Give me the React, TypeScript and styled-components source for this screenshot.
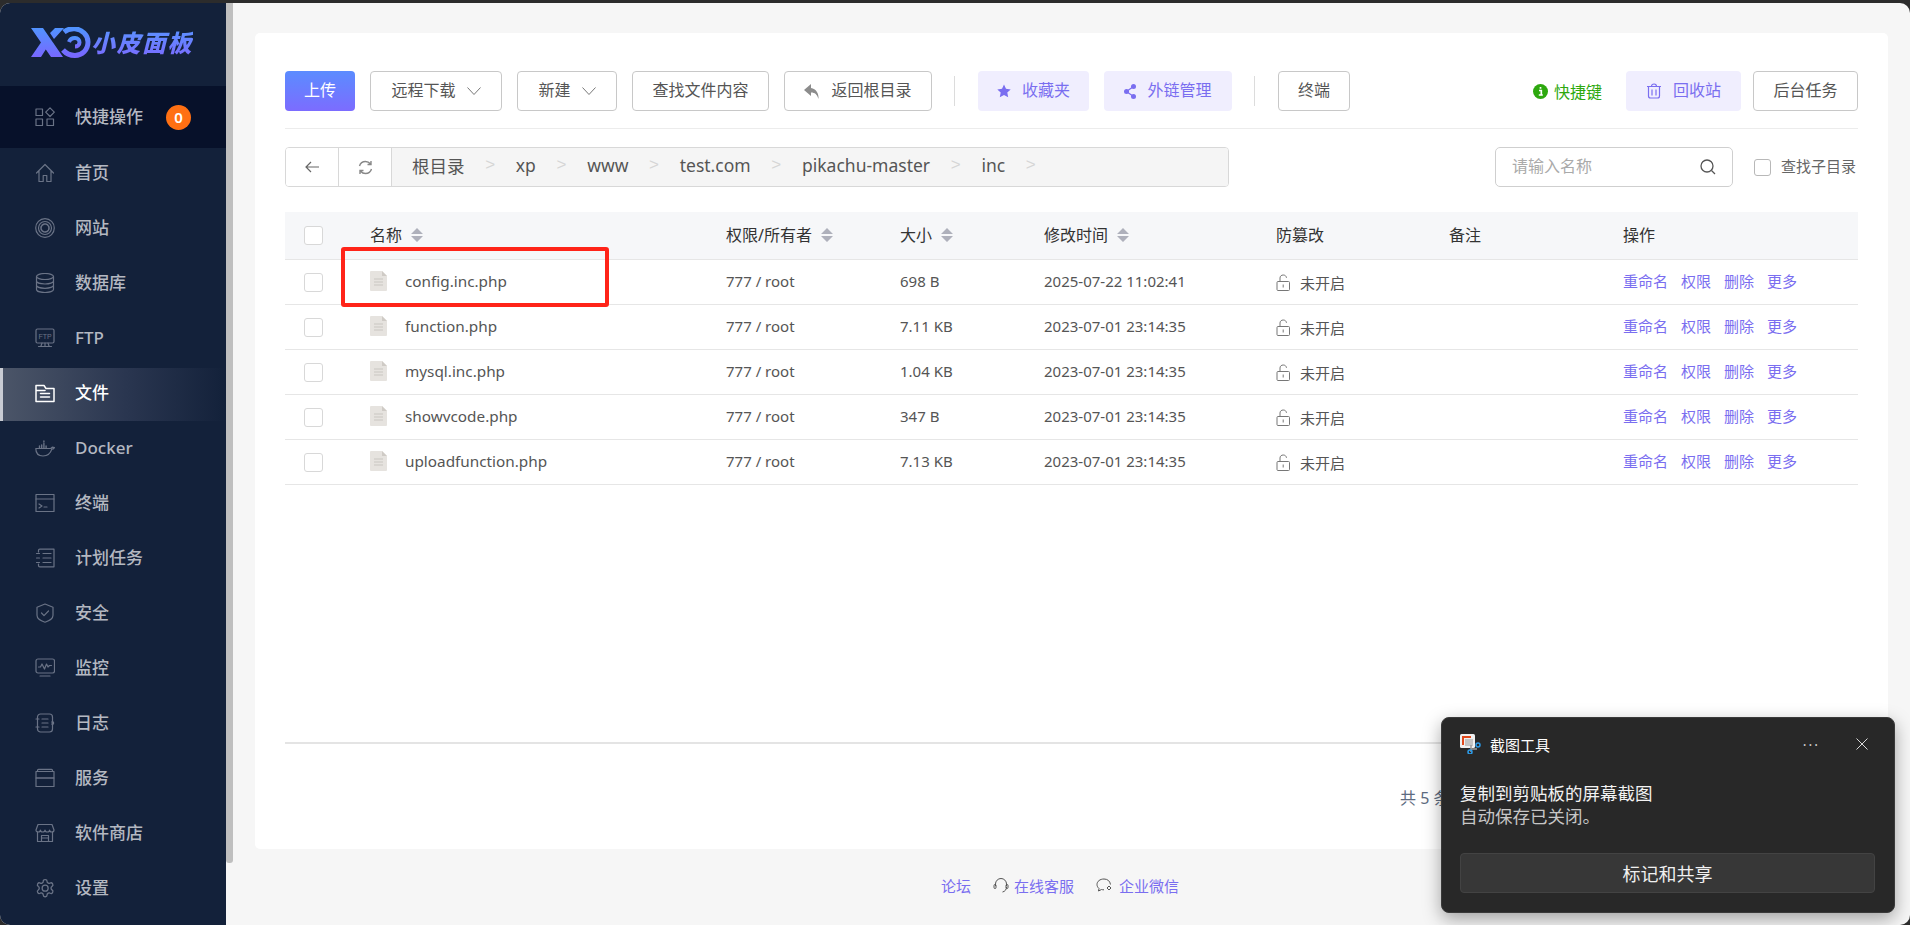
import React from "react";
import styled, { createGlobalStyle } from "styled-components";

const FONT = `"Noto Sans", "Noto Sans CJK SC", sans-serif`;

const Global = createGlobalStyle`
  html, body { margin: 0; padding: 0; height: 100%; background: #2c2c2c; overflow: hidden; }
  * { box-sizing: border-box; }
  body { font-family: ${FONT}; }
`;

const Frame = styled.div`
  position: relative;
  margin-top: 3px;
  width: 1910px;
  height: 922px;
  display: flex;
  border-radius: 10px;
  overflow: hidden;
  background: #f6f6f6;
`;

const Sidebar = styled.aside`
  width: 226px;
  flex: none;
  background: #13213a;
  display: flex;
  flex-direction: column;
`;

const LogoBar = styled.div`
  height: 83px;
  flex: none;
  display: flex;
  align-items: center;
  gap: 0;
  padding: 0 0 4px 31px;
`;

const LogoText = styled.span`
  font-size: 24px;
  line-height: 28px;
  font-weight: 900;
  font-style: italic;
  letter-spacing: 1.5px;
  white-space: nowrap;
  background: linear-gradient(180deg, #5a92ff, #7a6cff);
  -webkit-background-clip: text;
  background-clip: text;
  color: transparent;
`;

const QuickRow = styled.div`
  height: 62px;
  flex: none;
  background: #07112a;
  display: flex;
  align-items: center;
  padding-left: 35px;
`;

const Menu = styled.nav`
  display: flex;
  flex-direction: column;
  gap: 2px;
`;

const MenuRow = styled.div<{ $active?: boolean }>`
  height: 53px;
  display: flex;
  align-items: center;
  padding-left: ${(p) => (p.$active ? 32 : 35)}px;
  padding-bottom: 4px;
  border-left: ${(p) => (p.$active ? "3px solid #c9ccd3" : "none")};
  background: ${(p) =>
    p.$active ? "linear-gradient(90deg, #4b5568 0%, #2a3650 55%, #13213a 100%)" : "transparent"};
`;

const MenuIcon = styled.svg<{ $active?: boolean }>`
  width: 20px;
  height: 20px;
  flex: none;
  margin-right: 20px;
  fill: none;
  stroke: ${(p) => (p.$active ? "#ffffff" : "#6a7386")};
  stroke-width: 1.2;
  stroke-linejoin: round;
  stroke-linecap: round;
`;

const MenuLabel = styled.span<{ $active?: boolean }>`
  font-size: 17px;
  font-weight: 500;
  line-height: 24px;
  color: ${(p) => (p.$active ? "#ffffff" : "#b4b8c1")};
  white-space: nowrap;
`;

const Badge = styled.span`
  width: 25px;
  height: 25px;
  margin-left: 23px;
  border-radius: 50%;
  background: #ff7013;
  color: #fff;
  font-size: 15px;
  font-weight: 600;
  display: flex;
  align-items: center;
  justify-content: center;
`;

const ScrollThumb = styled.div`
  width: 7px;
  height: 860px;
  flex: none;
  background: #bfbfbf;
  border-radius: 0 0 3px 3px;
`;

const Main = styled.main`
  flex: 1;
  min-width: 0;
  display: flex;
  flex-direction: column;
  padding: 30px 22px 0 22px;
`;

const Card = styled.section`
  height: 816px;
  flex: none;
  background: #fff;
  border-radius: 5px;
  padding: 38px 30px 0;
  display: flex;
  flex-direction: column;
  position: relative;
`;

const Toolbar = styled.div`
  display: flex;
  align-items: center;
  height: 58px;
  padding-bottom: 17px;
  border-bottom: 1px solid #ececec;
  gap: 15px;
`;

const Btn = styled.button<{ $kind?: "primary" | "soft" | "plain"; $w: number }>`
  width: ${(p) => p.$w}px;
  height: 40px;
  flex: none;
  border-radius: 4px;
  font-family: ${FONT};
  font-size: 16px;
  padding: 0 0 4px;
  display: inline-flex;
  align-items: center;
  justify-content: center;
  gap: 11px;
  border: ${(p) => (!p.$kind || p.$kind === "plain" ? "1px solid #c8c8c8" : "none")};
  background: ${(p) =>
    p.$kind === "primary"
      ? "linear-gradient(180deg, #5b8cff, #7c6cff)"
      : p.$kind === "soft"
        ? "#f0eefe"
        : "#fff"};
  color: ${(p) => (p.$kind === "primary" ? "#fff" : p.$kind === "soft" ? "#7a6ef0" : "#555")};
  svg {
    margin-top: 4px;
  }
`;

const VSep = styled.span`
  width: 1px;
  height: 30px;
  background: #dcdcdc;
  margin: 0 8.5px 0 6.5px;
  flex: none;
`;

const RightTools = styled.div`
  margin-left: auto;
  display: flex;
  align-items: center;
  gap: 12px;
`;

const Hotkey = styled.span`
  display: inline-flex;
  align-items: center;
  gap: 6px;
  margin-right: 12px;
  color: #2da80e;
  font-size: 16px;
`;

const PathRow = styled.div`
  display: flex;
  align-items: center;
  margin-top: 18px;
  height: 40px;
`;

const PathBox = styled.div`
  width: 944px;
  height: 40px;
  display: flex;
  border: 1px solid #d8d8d8;
  border-radius: 4px;
  overflow: hidden;
`;

const PathBtn = styled.div`
  width: 53px;
  flex: none;
  display: flex;
  align-items: center;
  justify-content: center;
  border-right: 1px solid #d8d8d8;
  background: #fff;
  color: #666;
`;

const Crumbs = styled.div`
  flex: 1;
  background: #f5f5f5;
  display: flex;
  align-items: center;
  padding: 0 0 4px 20px;
  gap: 20.7px;
  font-size: 17.5px;
  color: #555;
`;

const CrumbSep = styled.span`
  color: #d6d6d6;
  font-size: 17px;
  font-family: "Liberation Sans", sans-serif;
`;

const Search = styled.div`
  margin-left: 266px;
  width: 238px;
  height: 40px;
  border: 1px solid #cfcfcf;
  border-radius: 5px;
  display: flex;
  align-items: center;
  justify-content: space-between;
  padding: 0 16px 4px;
  font-size: 16px;
  color: #aaa;
  svg {
    margin-top: 4px;
  }
`;

const SubCheck = styled.label`
  margin-left: 21px;
  display: flex;
  align-items: center;
  gap: 10px;
  font-size: 15px;
  color: #666;
  white-space: nowrap;
`;

const SubLabel = styled.span`
  padding-bottom: 4px;
`;

const Box = styled.span<{ $size?: number; $dark?: boolean }>`
  width: ${(p) => p.$size ?? 18}px;
  height: ${(p) => p.$size ?? 18}px;
  flex: none;
  display: block;
  background: #fff;
  border: 1px solid ${(p) => (p.$dark ? "#b8b8b8" : "#d8d8d8")};
  border-radius: 3px;
`;

const TableWrap = styled.div`
  margin-top: 25px;
`;

const GridRow = styled.div<{ $head?: boolean }>`
  display: grid;
  grid-template-columns: 85px 356px 174px 144px 232px 173px 174px 235px;
  align-items: center;
  height: ${(p) => (p.$head ? 48 : 45)}px;
  background: ${(p) => (p.$head ? "#f6f7f9" : "#fff")};
  border-bottom: 1px solid #e6e6e6;
  font-size: ${(p) => (p.$head ? 16 : 15)}px;
  color: ${(p) => (p.$head ? "#333" : "#555")};
`;

const CheckCell = styled.div`
  padding-left: 19px;
`;

const HeadCell = styled.div`
  display: flex;
  align-items: center;
  gap: 9px;
  padding-bottom: 4px;
  white-space: nowrap;
  svg {
    margin-top: 3px;
  }
`;

const TextCell = styled.div`
  padding-bottom: 2px;
  white-space: nowrap;
`;

const NameCell = styled.div`
  display: flex;
  align-items: center;
  gap: 18px;
  padding-bottom: 2px;
  font-size: 15.3px;
  white-space: nowrap;
`;

const TamperCell = styled.div`
  display: flex;
  align-items: center;
  gap: 9px;
`;

const Ops = styled.div`
  display: flex;
  gap: 13px;
  padding-bottom: 3px;
  color: #7a6ef0;
`;

const Highlight = styled.div`
  position: absolute;
  left: 86px;
  top: 214px;
  width: 268px;
  height: 60px;
  border: 4px solid #ff2419;
  border-radius: 3px;
  pointer-events: none;
`;

const PagerArea = styled.div`
  margin-top: auto;
  height: 107px;
  border-top: 2px solid #e4e4e4;
  padding: 40px 0 0 1115px;
  font-size: 16px;
  line-height: 28px;
  color: #5d6b80;
  white-space: nowrap;
  overflow: hidden;
`;

const Footer = styled.footer`
  flex: 1;
  display: flex;
  align-items: center;
  padding: 0 0 4px 686px;
  font-size: 15px;
  color: #7a6ef0;
`;

const FootLink = styled.span`
  display: inline-flex;
  align-items: center;
  gap: 5px;
  margin-right: 22px;
`;

const Toast = styled.aside`
  position: absolute;
  left: 1441px;
  top: 714px;
  width: 454px;
  height: 196px;
  background: #282828;
  border: 1px solid #3a3a3a;
  border-radius: 8px;
  box-shadow: 0 6px 18px rgba(0, 0, 0, 0.35);
  padding: 16px 19px 0 18px;
  color: #fff;
  display: flex;
  flex-direction: column;
`;

const ToastHead = styled.div`
  display: flex;
  align-items: center;
  height: 20px;
  font-size: 15px;
  gap: 9px;
`;

const ToastActions = styled.div`
  margin-left: auto;
  display: flex;
  align-items: center;
  gap: 36px;
  padding-right: 7px;
  color: #cfcfcf;
  font-size: 14px;
  letter-spacing: 2px;
`;

const ToastTitle = styled.div`
  margin-top: 28px;
  font-size: 17.5px;
  line-height: 23px;
  color: #f2f2f2;
`;

const ToastText = styled.div`
  font-size: 17.5px;
  line-height: 23px;
  color: #c6c6c6;
`;

const ToastBtn = styled.div`
  margin-top: 25px;
  height: 40px;
  background: #373737;
  border: 1px solid #434343;
  border-radius: 4px;
  display: flex;
  align-items: center;
  justify-content: center;
  font-size: 18px;
  color: #f0f0f0;
`;

const menuIcons: Record<string, React.ReactNode> = {
  home: <path d="M1.5 10 10 1.5 18.500 10M4 8v10.500h4.200v-6h3.600v6H16V8" />,
  site: (
    <>
      <circle cx="10" cy="10" r="9.300" />
      <circle cx="10" cy="10" r="6.500" />
      <circle cx="10" cy="10" r="4" strokeDasharray="1.500 1" strokeWidth="1.600" />
    </>
  ),
  db: (
    <>
      <ellipse cx="10" cy="3.500" rx="8.500" ry="3" />
      <path d="M1.500 3.500v13c0 1.700 3.800 3 8.500 3s8.500-1.300 8.500-3v-13M1.500 8c0 1.700 3.800 3 8.500 3s8.500-1.300 8.500-3M1.500 12.300c0 1.700 3.800 3 8.500 3s8.500-1.300 8.500-3" />
    </>
  ),
  ftp: (
    <>
      <rect x="1" y="1" width="18" height="14" rx="1.500" />
      <path d="M10 15v3M3.500 18.500h13M6 18l1-3M14 18l-1-3" />
      <text x="10" y="11" textAnchor="middle" fontSize="7" fontFamily="Liberation Sans, sans-serif" fontWeight="400" fill="#6a7386" stroke="none">
        FTP
      </text>
    </>
  ),
  file: <path d="M1 2.500h8l2 3h8v13H1zM1 7.500h9M5.500 10.500h9M5.500 14h9" strokeWidth="1.500" />,
  docker: (
    <>
      <path d="M.8 10.500h14.500c.8 0 1.500-.7 2-1.300l2.200.4c-.9 1.200-1.800 1.600-2.700 1.600-1.200 4-4.200 6.800-8.800 6.800-4.800 0-7.200-3-7.200-7.500z" />
      <path d="M4.500 10V8M6.700 10V7M8.900 10V5.500M11.100 10V8M8.900 4V3" strokeWidth="1.400" />
    </>
  ),
  term: (
    <>
      <rect x="1" y="1.500" width="18" height="17" />
      <path d="M1 6h18M4 11l3 2-3 2M9 14h3" />
    </>
  ),
  cron: (
    <>
      <path d="M3.500 4V2.500C3.500 1.700 4 1.200 4.800 1.200H19v17.600H4.800c-.8 0-1.300-.5-1.300-1.300V16" />
      <path d="M1.500 5.500h3M1.500 10h3M1.500 14.500h3M8 5.500h8M8 10h8M8 14.500h8" />
    </>
  ),
  shield: (
    <>
      <path d="M10 1 18 4.200v8c0 3-3.600 5.600-8 7-4.400-1.400-8-4-8-7v-8z" />
      <path d="m6.500 10 2.500 2.600 4.500-4.600" />
    </>
  ),
  monitor: (
    <>
      <rect x="1" y="1" width="18.500" height="14" rx="2" />
      <path d="M3.500 9h2l1.500-3 2.500 5 2-5 1.500 3 1.500-1.500h2M5 18h10" />
    </>
  ),
  log: (
    <>
      <rect x="2.500" y="1" width="15" height="18" rx="3" />
      <path d="M7 6h6M7 10h6M7 14h6M1 6h3M1 14h3M16.500 9h2v2h-2" />
    </>
  ),
  service: (
    <>
      <path d="M2.500 3.500V2.400c0-.6.4-1 1-1h13c.6 0 1 .4 1 1v1.100" />
      <rect x="1" y="3.500" width="18" height="6.500" />
      <rect x="1" y="10" width="18" height="8.500" />
    </>
  ),
  store: (
    <>
      <path d="M3 1.500h14l2 5.500c0 1.500-1.100 2-2.200 2-1.100 0-2.200-.7-2.200-2 0 1.300-1.200 2-2.300 2s-2.300-.7-2.300-2c0 1.300-1.200 2-2.300 2s-2.300-.7-2.300-2c0 1.300-1.100 2-2.200 2C2.100 9 1 8.500 1 7z" />
      <path d="M2.500 9v9.500h15V9M6.500 18.500v-6h7v6M6.500 15h7" />
    </>
  ),
  gear: (
    <g transform="scale(.86) translate(-.2 -.2)" strokeWidth="1.500">
      <path d="M12.220 2h-.44a2 2 0 0 0-2 2v.18a2 2 0 0 1-1 1.730l-.43.250a2 2 0 0 1-2 0l-.15-.08a2 2 0 0 0-2.730.730l-.22.380a2 2 0 0 0 .730 2.730l.15.100a2 2 0 0 1 1 1.720v.510a2 2 0 0 1-1 1.740l-.15.090a2 2 0 0 0-.730 2.730l.22.380a2 2 0 0 0 2.730.730l.15-.08a2 2 0 0 1 2 0l.43.250a2 2 0 0 1 1 1.730V20a2 2 0 0 0 2 2h.44a2 2 0 0 0 2-2v-.18a2 2 0 0 1 1-1.730l.43-.25a2 2 0 0 1 2 0l.15.080a2 2 0 0 0 2.730-.730l.22-.39a2 2 0 0 0-.730-2.730l-.15-.08a2 2 0 0 1-1-1.740v-.5a2 2 0 0 1 1-1.740l.15-.09a2 2 0 0 0 .730-2.730l-.22-.38a2 2 0 0 0-2.730-.730l-.15.080a2 2 0 0 1-2 0l-.43-.25a2 2 0 0 1-1-1.730V4a2 2 0 0 0-2-2z" />
      <circle cx="12" cy="12" r="3.500" />
    </g>
  ),
};

const menu: [string, string][] = [
  ["home", "首页"],
  ["site", "网站"],
  ["db", "数据库"],
  ["ftp", "FTP"],
  ["file", "文件"],
  ["docker", "Docker"],
  ["term", "终端"],
  ["cron", "计划任务"],
  ["shield", "安全"],
  ["monitor", "监控"],
  ["log", "日志"],
  ["service", "服务"],
  ["store", "软件商店"],
  ["gear", "设置"],
];

const files = [
  ["config.inc.php", "698 B", "2025-07-22 11:02:41"],
  ["function.php", "7.11 KB", "2023-07-01 23:14:35"],
  ["mysql.inc.php", "1.04 KB", "2023-07-01 23:14:35"],
  ["showvcode.php", "347 B", "2023-07-01 23:14:35"],
  ["uploadfunction.php", "7.13 KB", "2023-07-01 23:14:35"],
];

const crumbs = ["根目录", "xp", "www", "test.com", "pikachu-master", "inc"];

const LogoMark = () => (
  <svg width="60" height="31" viewBox="0 0 60 31" style={{ flex: "none" }}>
    <defs>
      <linearGradient id="lg" x1="0" y1="0" x2="0" y2="1">
        <stop offset="0" stopColor="#5193ff" />
        <stop offset="1" stopColor="#7868ff" />
      </linearGradient>
    </defs>
    <path d="M0 1h12l20 29H20zM0 30 11 14l5 6.500-6 9.500zM19 6l5-5h9L23 12z" fill="url(#lg)" />
    <path
      d="M33 5C36 2.500 40 1.500 44 1.800 51 2.500 57 8 57 15 57 23 51 28.500 44 28.500 39 28.500 35 26.500 32 23"
      fill="none"
      stroke="url(#lg)"
      strokeWidth="5"
    />
    <path d="M38 15C39 12 41 11 44 11 47 11 48.500 13 48.500 15.500 48.500 18 46.500 19.500 44 19.500" fill="none" stroke="url(#lg)" strokeWidth="4" />
  </svg>
);

const Chevron = () => (
  <svg width="14" height="8" viewBox="0 0 14 8" fill="none" stroke="#777" strokeWidth="1">
    <path d="m.5.5 6.500 7 6.500-7" />
  </svg>
);

const Sort = () => (
  <svg width="12" height="14" viewBox="0 0 12 14" fill="#aeb0bb">
    <path d="M6 0 12 6H0zM0 8h12l-6 6z" />
  </svg>
);

const FileIcon = () => (
  <svg width="17" height="20" viewBox="0 0 17 20" style={{ flex: "none" }}>
    <path d="M0 1a1 1 0 0 1 1-1h11l5 5v14a1 1 0 0 1-1 1H1a1 1 0 0 1-1-1z" fill="#e6e3df" />
    <path d="M12 0l5 5h-5z" fill="#cfcbc6" />
    <path d="M4 8h9M4 11h9M4 14h9" stroke="#c9c6c1" strokeWidth="1" />
  </svg>
);

const Lock = () => (
  <svg width="15" height="17" viewBox="0 0 15 17" fill="none" stroke="#777" strokeWidth="1">
    <rect x="1" y="7.500" width="12.500" height="9" rx="1" />
    <path d="M4 7.500V4c0-1.800 1.400-3 3.200-3s3 1 3.300 2.800M7.200 10.500v3" />
  </svg>
);

const SnipIcon = () => (
  <svg width="21" height="20" viewBox="0 0 21 20" style={{ flex: "none" }}>
    <rect x="0" y="0" width="15" height="14" rx="1.500" fill="#f0f0f0" />
    <path d="M2 2h9v2H4v7H2z" fill="#e0491c" />
    <rect x="5" y="5" width="8" height="7" fill="#c4c4c4" />
    <path d="M11 15h6M11 11v7" stroke="#9a9a9a" strokeWidth="1.500" />
    <circle cx="18" cy="11" r="2" fill="none" stroke="#2b9be8" strokeWidth="1.500" />
    <circle cx="10" cy="18" r="2" fill="none" stroke="#2b9be8" strokeWidth="1.500" />
  </svg>
);

export default function App() {
  return (
    <>
      <Global />
      <Frame>
        <Sidebar>
          <LogoBar>
            <LogoMark />
            <LogoText>小皮面板</LogoText>
          </LogoBar>
          <QuickRow>
            <MenuIcon viewBox="0 0 20 20">
              <rect x="1" y="2" width="6.500" height="6.500" />
              <path d="m15 .8 4.300 4.400-4.300 4.300-4.300-4.300z" />
              <rect x="1" y="12" width="6.500" height="6.500" />
              <rect x="12" y="12" width="6.500" height="6.500" />
            </MenuIcon>
            <MenuLabel>快捷操作</MenuLabel>
            <Badge>0</Badge>
          </QuickRow>
          <Menu>
            {menu.map(([icon, label]) => {
              const active = label === "文件";
              return (
                <MenuRow key={label} $active={active}>
                  <MenuIcon viewBox="0 0 20 20" $active={active}>
                    {menuIcons[icon]}
                  </MenuIcon>
                  <MenuLabel $active={active}>{label}</MenuLabel>
                </MenuRow>
              );
            })}
          </Menu>
        </Sidebar>
        <ScrollThumb />
        <Main>
          <Card>
            <Toolbar>
              <Btn $kind="primary" $w={70}>上传</Btn>
              <Btn $w={132}>
                远程下载 <Chevron />
              </Btn>
              <Btn $w={100}>
                新建 <Chevron />
              </Btn>
              <Btn $w={137}>查找文件内容</Btn>
              <Btn $w={148}>
                <svg width="16" height="15" viewBox="0 0 16 15" fill="#8c8c8c">
                  <path d="M7 0 0 6l7 6V8.500c4 0 6 2 7.500 6.500.5-6-2.500-10-7.500-11z" />
                </svg>
                返回根目录
              </Btn>
              <VSep />
              <Btn $kind="soft" $w={111}>
                <svg width="14" height="14" viewBox="0 0 14 14" fill="#7a6ef0">
                  <path d="m7 .5 2 4.300 4.700.6-3.400 3.200.9 4.700L7 11l-4.200 2.300.9-4.700L.3 5.400 5 4.800z" />
                </svg>
                收藏夹
              </Btn>
              <Btn $kind="soft" $w={128}>
                <svg width="12" height="15" viewBox="0 0 12 15" fill="#7a6ef0">
                  <circle cx="9.500" cy="2.500" r="2.500" />
                  <circle cx="2.500" cy="7.500" r="2.500" />
                  <circle cx="9.500" cy="12.500" r="2.500" />
                  <path d="M9.500 2.500l-7 5 7 5" fill="none" stroke="#7a6ef0" strokeWidth="1.200" />
                </svg>
                外链管理
              </Btn>
              <VSep />
              <Btn $w={72}>终端</Btn>
              <RightTools>
                <Hotkey>
                  <svg width="15" height="15" viewBox="0 0 15 15">
                    <circle cx="7.500" cy="7.500" r="7.500" fill="#2da80e" />
                    <path d="M6 6.500h2.300v4.500M5.800 11h4M7.500 3v1.800" stroke="#fff" strokeWidth="1.700" fill="none" />
                  </svg>
                  快捷键
                </Hotkey>
                <Btn $kind="soft" $w={115}>
                  <svg width="16" height="16" viewBox="0 0 16 16" fill="none" stroke="#7a6ef0" strokeWidth="1.200">
                    <path d="M1 3.500h14M5.500 3.500C5.500 1.800 6.500 1 8 1s2.500.8 2.500 2.500M2.500 3.500V13c0 1.200.8 2 2 2h7c1.200 0 2-.8 2-2V3.500M6 6.500v6M10 6.500v6" />
                  </svg>
                  回收站
                </Btn>
                <Btn $w={105}>后台任务</Btn>
              </RightTools>
            </Toolbar>
            <PathRow>
              <PathBox>
                <PathBtn>
                  <svg width="14" height="12" viewBox="0 0 14 12" fill="none" stroke="#666" strokeWidth="1.200">
                    <path d="M14 6H1M6 1 1 6l5 5" />
                  </svg>
                </PathBtn>
                <PathBtn>
                  <svg width="15" height="15" viewBox="0 0 15 15" fill="none" stroke="#888" strokeWidth="1.400">
                    <path d="M1.500 6C2.300 3.300 4.600 1.500 7.500 1.500c2 0 3.700.9 4.900 2.300M13.500 9c-.8 2.700-3.100 4.500-6 4.500-2 0-3.700-.9-4.900-2.300M13 1v3.500H9.500M2 14v-3.500h3.500" />
                  </svg>
                </PathBtn>
                <Crumbs>
                  {crumbs.map((c) => (
                    <React.Fragment key={c}>
                      <span>{c}</span>
                      <CrumbSep>&gt;</CrumbSep>
                    </React.Fragment>
                  ))}
                </Crumbs>
              </PathBox>
              <Search>
                请输入名称
                <svg width="16" height="16" viewBox="0 0 16 16" fill="none" stroke="#555" strokeWidth="1.300">
                  <circle cx="7" cy="7" r="6" />
                  <path d="m11.500 11.500 3.500 3.500" />
                </svg>
              </Search>
              <SubCheck>
                <Box $size={17} $dark />
                <SubLabel>查找子目录</SubLabel>
              </SubCheck>
            </PathRow>
            <TableWrap>
              <GridRow $head>
                <CheckCell>
                  <Box $size={19} />
                </CheckCell>
                <HeadCell>
                  名称 <Sort />
                </HeadCell>
                <HeadCell>
                  权限/所有者 <Sort />
                </HeadCell>
                <HeadCell>
                  大小 <Sort />
                </HeadCell>
                <HeadCell>
                  修改时间 <Sort />
                </HeadCell>
                <HeadCell>防篡改</HeadCell>
                <HeadCell>备注</HeadCell>
                <HeadCell>操作</HeadCell>
              </GridRow>
              {files.map(([name, size, time]) => (
                <GridRow key={name}>
                  <CheckCell>
                    <Box $size={19} />
                  </CheckCell>
                  <NameCell>
                    <FileIcon />
                    {name}
                  </NameCell>
                  <TextCell>777 / root</TextCell>
                  <TextCell>{size}</TextCell>
                  <TextCell>{time}</TextCell>
                  <TamperCell>
                    <Lock />
                    未开启
                  </TamperCell>
                  <div />
                  <Ops>
                    <span>重命名</span>
                    <span>权限</span>
                    <span>删除</span>
                    <span>更多</span>
                  </Ops>
                </GridRow>
              ))}
            </TableWrap>
            <Highlight />
            <PagerArea>共 5 条</PagerArea>
          </Card>
          <Footer>
            <FootLink>论坛</FootLink>
            <FootLink>
              <svg width="16" height="16" viewBox="0 0 16 16" fill="none" stroke="#555" strokeWidth="1">
                <path d="M2.500 9V7a5.500 5.500 0 0 1 11 0v2M13.500 10c0 2.500-1.500 4.500-4 5" />
                <rect x="1" y="7.500" width="2" height="4" rx="1" />
                <rect x="13" y="7.500" width="2" height="4" rx="1" />
              </svg>
              在线客服
            </FootLink>
            <FootLink>
              <svg width="18" height="15" viewBox="0 0 18 15" fill="none" stroke="#555" strokeWidth="1">
                <path d="M14.500 6.500C14 3 11.500 1 8 1 4 1 1 3.300 1 6.500c0 1.600.8 3 2 4L2.500 13l3-1.500c.8.200 1.500.3 2.500.3" />
                <path d="m13 8 2 2-2 2-2-2z" />
              </svg>
              企业微信
            </FootLink>
          </Footer>
        </Main>
        <Toast>
          <ToastHead>
            <SnipIcon />
            截图工具
            <ToastActions>
              <span>···</span>
              <svg width="12" height="12" viewBox="0 0 12 12" stroke="#d8d8d8" strokeWidth="1">
                <path d="m.5.5 11 11M11.500.5l-11 11" />
              </svg>
            </ToastActions>
          </ToastHead>
          <ToastTitle>复制到剪贴板的屏幕截图</ToastTitle>
          <ToastText>自动保存已关闭。</ToastText>
          <ToastBtn>标记和共享</ToastBtn>
        </Toast>
      </Frame>
    </>
  );
}
